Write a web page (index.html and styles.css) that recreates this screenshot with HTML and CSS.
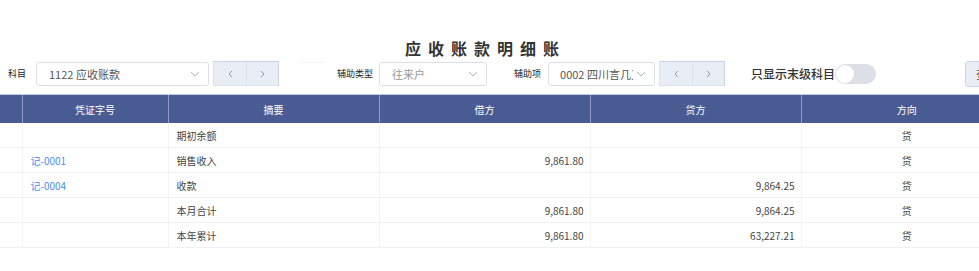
FILE: index.html
```html
<!DOCTYPE html>
<html lang="zh-CN">
  <head>
    <meta charset="UTF-8" />
    <meta name="viewport" content="width=device-width, initial-scale=1" />
    <title>应收账款明细账</title>
    <link rel="stylesheet" href="styles.css">
  </head>
  <body>
    <div class="page">
      <h1 class="title">应收账款明细账</h1>

      <div class="toolbar">
        <span class="label label-subject">科目</span>
        <div class="select select-subject">
          <span class="select-text">1122 应收账款</span>
          <svg class="chevron" width="10" height="6" viewBox="0 0 10 6"><path d="M1 1l4 4 4-4" fill="none" stroke="#b4b8c0" stroke-width="1"/></svg>
        </div>
        <div class="pager">
          <button class="pager-btn"><svg width="5" height="8" viewBox="0 0 5 8"><path d="M4 1L1 4l3 3" fill="none" stroke="#8d98b0" stroke-width="1"/></svg></button>
          <button class="pager-btn"><svg width="5" height="8" viewBox="0 0 5 8"><path d="M1 1l3 3-3 3" fill="none" stroke="#8d98b0" stroke-width="1"/></svg></button>
        </div>
        <div class="ghost"></div>

        <span class="label label-type">辅助类型</span>
        <div class="select select-type">
          <span class="select-text muted">往来户</span>
          <svg class="chevron" width="10" height="6" viewBox="0 0 10 6"><path d="M1 1l4 4 4-4" fill="none" stroke="#b4b8c0" stroke-width="1"/></svg>
        </div>

        <span class="label label-item">辅助项</span>
        <div class="select select-item">
          <span class="select-text">0002 四川言几又贸易有限公司</span>
          <svg class="chevron" width="10" height="6" viewBox="0 0 10 6"><path d="M1 1l4 4 4-4" fill="none" stroke="#b4b8c0" stroke-width="1"/></svg>
        </div>
        <div class="pager">
          <button class="pager-btn"><svg width="5" height="8" viewBox="0 0 5 8"><path d="M4 1L1 4l3 3" fill="none" stroke="#8d98b0" stroke-width="1"/></svg></button>
          <button class="pager-btn"><svg width="5" height="8" viewBox="0 0 5 8"><path d="M1 1l3 3-3 3" fill="none" stroke="#8d98b0" stroke-width="1"/></svg></button>
        </div>

        <span class="switch-label">只显示末级科目</span>
        <span class="switch"><span class="switch-knob"></span></span>

        <button class="btn">查询</button>
      </div>

      <table class="ledger">
        <colgroup>
          <col class="col-date" />
          <col class="col-voucher" />
          <col class="col-wide" />
          <col class="col-wide" />
          <col class="col-wide" />
          <col class="col-wide" />
        </colgroup>
        <thead>
          <tr>
            <th>日期</th>
            <th>凭证字号</th>
            <th>摘要</th>
            <th>借方</th>
            <th>贷方</th>
            <th>方向</th>
          </tr>
        </thead>
        <tbody>
          <tr>
            <td></td>
            <td></td>
            <td>期初余额</td>
            <td class="num"></td>
            <td class="num"></td>
            <td class="dir">贷</td>
          </tr>
          <tr>
            <td></td>
            <td><a class="link">记-0001</a></td>
            <td>销售收入</td>
            <td class="num">9,861.80</td>
            <td class="num"></td>
            <td class="dir">贷</td>
          </tr>
          <tr>
            <td></td>
            <td><a class="link">记-0004</a></td>
            <td>收款</td>
            <td class="num"></td>
            <td class="num">9,864.25</td>
            <td class="dir">贷</td>
          </tr>
          <tr>
            <td></td>
            <td></td>
            <td>本月合计</td>
            <td class="num">9,861.80</td>
            <td class="num">9,864.25</td>
            <td class="dir">贷</td>
          </tr>
          <tr>
            <td></td>
            <td></td>
            <td>本年累计</td>
            <td class="num">9,861.80</td>
            <td class="num">63,227.21</td>
            <td class="dir">贷</td>
          </tr>
        </tbody>
      </table>
    </div>
  </body>
</html>
```

FILE: styles.css
```css
:root {
  --header: #485b93;
  --header-line: #8e9cc4;
  --row-line: #eef0f6;
  --text: #333;
  --muted: #999;
  --border: #dcdfe6;
  --pager-bg: #e9edf5;
  --pager-border: #c9d5ea;
  --link: #4a8cf0;
}
html,
body {
  margin: 0;
  overflow: hidden;
}
body {
  background: #fff;
  font-family: "Noto Sans CJK SC", "Noto Sans", sans-serif;
  color: var(--text);
}
.page {
  width: 979px;
  padding-top: 36px;
  overflow: hidden;
}
.title {
  margin: 0 8px 0 0;
  text-align: center;
  font-size: 16px;
  line-height: 24px;
  font-weight: 700;
  letter-spacing: 7px;
  color: #333;
}
.toolbar {
  display: flex;
  align-items: center;
  height: 25px;
  margin-top: 1px;
  padding-left: 8px;
  white-space: nowrap;
}
.toolbar > * {
  flex: none;
}
.label {
  font-size: 9px;
  color: #222;
  margin-right: 6px;
}
.label-subject {
  margin-right: 10px;
}
.label-type {
  margin-left: 13px;
}
.label-item {
  margin-left: 27px;
  margin-right: 7px;
}
.select {
  box-sizing: border-box;
  height: 24px;
  border: 1px solid var(--border);
  border-radius: 3px;
  display: flex;
  align-items: center;
  padding: 0 8px 0 12px;
  overflow: hidden;
  background: #fff;
}
.select-subject {
  width: 173px;
}
.select-type {
  width: 108px;
}
.select-item {
  width: 107px;
  padding-left: 11px;
}
.select-text {
  flex: 1;
  min-width: 0;
  font-size: 11px;
  color: #555;
  overflow: hidden;
  white-space: nowrap;
}
.select-text.muted {
  color: var(--muted);
}
.chevron {
  flex: none;
  margin-left: 3px;
}
.pager {
  display: flex;
  height: 25px;
  margin-left: 4px;
  box-sizing: border-box;
  border: 1px solid var(--pager-border);
  border-left-color: #dde3ee;
  border-bottom-color: #dde3ee;
  background: var(--pager-bg);
}
.pager-btn {
  width: 32px;
  height: 100%;
  border: none;
  background: transparent;
  padding: 0;
  display: flex;
  align-items: center;
  justify-content: center;
}
.pager-btn + .pager-btn {
  border-left: 1px solid #dde3ee;
}
.ghost {
  width: 22px;
  height: 22px;
  margin-left: 23px;
  border-top: 1px solid #f0f1f4;
}
.switch-label {
  margin-left: 26px;
  font-size: 12px;
  font-weight: 500;
  color: #303133;
}
.switch {
  position: relative;
  width: 41px;
  height: 20px;
  border-radius: 10px;
  background: #dcdfe6;
}
.switch-knob {
  position: absolute;
  left: 1px;
  top: 1px;
  width: 18px;
  height: 18px;
  border-radius: 50%;
  background: #fff;
}
.btn {
  margin-left: 89px;
  height: 26px;
  padding: 0 10px;
  background: var(--pager-bg);
  border: 1px solid var(--pager-border);
  border-radius: 3px;
  font-family: inherit;
  font-size: 11px;
  color: #555;
}
.ledger {
  margin-top: 8px;
  width: 1012px;
  table-layout: fixed;
  border-collapse: collapse;
  font-size: 10px;
}
.col-date {
  width: 22px;
}
.col-voucher {
  width: 146px;
}
.col-wide {
  width: 211px;
}
.ledger th {
  height: 28px;
  padding: 0;
  background: var(--header);
  color: #fff;
  font-weight: 400;
  border-top: 1px solid #c3cadd;
  border-left: 1px solid var(--header-line);
  overflow: hidden;
  white-space: nowrap;
}
.ledger th:first-child {
  border-left: none;
  color: transparent;
}
.ledger td {
  height: 24px;
  padding: 0 8px;
  border-bottom: 1px solid var(--row-line);
  border-left: 1px solid #f2f3f7;
  white-space: nowrap;
  overflow: hidden;
  color: #444;
}
.ledger td:first-child {
  border-left: none;
}
.ledger td.num {
  text-align: right;
  padding-right: 6px;
}
.ledger td.dir {
  text-align: center;
}
.link {
  color: var(--link);
  cursor: pointer;
}
```
